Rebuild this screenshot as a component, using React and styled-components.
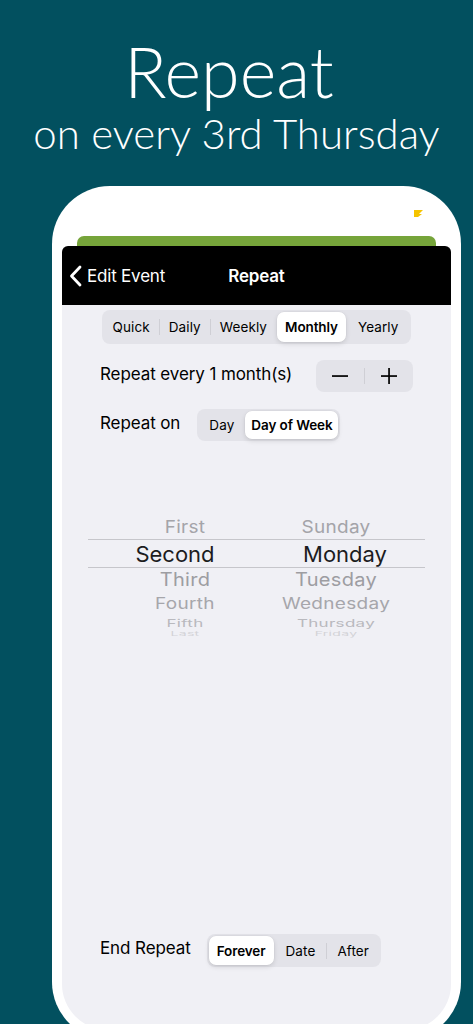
import React from "react";
import styled, { createGlobalStyle } from "styled-components";

const GlobalStyle = createGlobalStyle`
  html, body {
    margin: 0;
    padding: 0;
    background: #02505f;
  }
  body {
    width: 473px;
    height: 1024px;
    overflow: hidden;
    font-family: Inter, "Liberation Sans", sans-serif;
    -webkit-font-smoothing: antialiased;
  }
`;

const Page = styled.div`
  width: 473px;
  height: 1024px;
  overflow: hidden;
  background: #02505f;
`;

const Header = styled.header`
  display: flex;
  flex-direction: column;
  align-items: center;
  color: #fff;
  font-family: Lato, "Noto Sans", sans-serif;
  font-weight: 300;
  padding-top: 33px;
  height: 158px;
  box-sizing: border-box;
`;

const Title = styled.h1`
  margin: 0;
  padding-right: 15px;
  font-size: 70px;
  font-weight: 300;
  line-height: 76px;
`;

const Subtitle = styled.h2`
  margin: 0;
  font-size: 42px;
  font-weight: 300;
  line-height: 48px;
`;

const Phone = styled.div`
  margin: 28px 0 0 52px;
  width: 409px;
  height: 854px;
  box-sizing: border-box;
  background: #fff;
  border-radius: 58px;
  padding: 20px 10px 10px;
  display: flex;
  flex-direction: column;
`;

const StatusBar = styled.div`
  height: 30px;
  display: flex;
  justify-content: flex-end;
  padding-right: 28px;
`;

const Charge = styled.svg`
  width: 9px;
  height: 9px;
  margin-top: 3px;
`;

const SheetEdge = styled.div`
  height: 10px;
  margin: 0 15px;
  background: #76a43a;
  border-radius: 7px 7px 0 0;
`;

const Screen = styled.div`
  flex: 1;
  display: flex;
  flex-direction: column;
  border-radius: 6px 6px 46px 46px;
  overflow: hidden;
  background: #f0f0f5;
`;

const NavBar = styled.nav`
  height: 59px;
  background: #000;
  color: #fff;
  display: grid;
  grid-template-columns: 1fr auto 1fr;
  align-items: center;
  font-size: 17px;
`;

const BackButton = styled.div`
  display: flex;
  align-items: center;
  gap: 5px;
  padding-left: 7px;
  letter-spacing: -0.2px;
`;

const NavTitle = styled.div`
  font-weight: 600;
  letter-spacing: -0.2px;
`;

const Content = styled.div`
  display: flex;
  flex-direction: column;
  padding: 5px 38px 0;
`;

const Segmented = styled.div`
  display: inline-flex;
  align-self: ${(p) => p.$align || "auto"};
  align-items: center;
  padding: 2px;
  height: ${(p) => p.$height || 32}px;
  box-sizing: border-box;
  background: #e3e3e9;
  border-radius: 8px;
`;

const Segment = styled.div`
  height: 100%;
  display: flex;
  align-items: center;
  padding: 0 ${(p) => p.$pad}px;
  font-size: 13.5px;
  font-weight: ${(p) => (p.$active ? 600 : 400)};
  letter-spacing: ${(p) => (p.$active ? "-0.1px" : "0.1px")};
  color: #000;
  border-radius: 7px;
  background: ${(p) => (p.$active ? "#fff" : "transparent")};
  box-shadow: ${(p) =>
    p.$active ? "0 2px 5px rgba(0,0,0,0.12), 0 0 0 0.5px rgba(0,0,0,0.04)" : "none"};
`;

const Divider = styled.div`
  width: 1px;
  height: 16px;
  background: ${(p) => (p.$hidden ? "transparent" : "#cfcfd5")};
  flex-shrink: 0;
`;

const Row = styled.div`
  display: flex;
  align-items: center;
  justify-content: ${(p) => p.$justify || "flex-start"};
  gap: ${(p) => p.$gap || 0}px;
  margin-top: ${(p) => p.$top}px;
`;

const Label = styled.span`
  font-size: 17px;
  color: #000;
  letter-spacing: -0.1px;
  margin-top: ${(p) => p.$lift || 0}px;
`;

const Stepper = styled.div`
  display: flex;
  align-items: center;
  width: 97px;
  height: 32px;
  background: #e3e3e9;
  border-radius: 8px;
`;

const StepButton = styled.div`
  flex: 1;
  height: 100%;
  display: flex;
  align-items: center;
  justify-content: center;
`;

const Picker = styled.div`
  margin: 73px -12px 0;
  display: flex;
  flex-direction: column;
`;

const WheelRow = styled.div`
  display: grid;
  grid-template-columns: 194px 108px;
  height: ${(p) => p.$h}px;
  border-top: ${(p) => (p.$selected ? "1px solid #c6c6cb" : "none")};
  border-bottom: ${(p) => (p.$selected ? "1px solid #c6c6cb" : "none")};
  box-sizing: border-box;
  overflow: visible;
`;

const WheelCell = styled.div`
  display: flex;
  align-items: center;
  justify-content: center;
  white-space: nowrap;
  font-size: ${(p) => p.$size}px;
  color: ${(p) => p.$color};
  letter-spacing: ${(p) => (p.$selected ? "0" : "0.3px")};
  transform: translateX(${(p) => p.$shift || 0}px) scaleY(${(p) => p.$sy});
`;

const wheel = [
  { left: "First", right: "Sunday", h: 25, size: 19, color: "#a4a4a9", sy: 0.93 },
  { left: "Second", right: "Monday", h: 29, size: 22, color: "#1c1c1e", sy: 1, selected: true },
  { left: "Third", right: "Tuesday", h: 24, size: 20, color: "#9d9da2", sy: 0.92 },
  { left: "Fourth", right: "Wednesday", h: 21, size: 19, color: "#a6a6ab", sy: 0.8 },
  { left: "Fifth", right: "Thursday", h: 12, size: 17, color: "#b9b9be", sy: 0.62 },
  { left: "Last", right: "Friday", h: 10, size: 14, color: "#d3d3d7", sy: 0.45 },
];

function SegmentGroup({ items, active, height, align }) {
  const parts = [];
  items.forEach((item, i) => {
    if (i > 0) {
      const hidden = i === active || i - 1 === active;
      parts.push(<Divider key={"d" + i} $hidden={hidden} />);
    }
    parts.push(
      <Segment key={item.label} $active={i === active} $pad={item.pad}>
        {item.label}
      </Segment>
    );
  });
  return (
    <Segmented $height={height} $align={align}>
      {parts}
    </Segmented>
  );
}

export default function App() {
  return (
    <Page>
      <GlobalStyle />
      <Header>
        <Title>Repeat</Title>
        <Subtitle>on every 3rd Thursday</Subtitle>
      </Header>

      <Phone>
        <StatusBar>
          <Charge viewBox="0 0 9 9">
            <path d="M0 1 H9 L5 5 H8 L4 8 H0 Z" fill="#f5c400" />
          </Charge>
        </StatusBar>
        <SheetEdge />
        <Screen>
          <NavBar>
            <BackButton>
              <svg width="13" height="22" viewBox="0 0 13 22">
                <path
                  d="M11 2 L2.5 11 L11 20"
                  fill="none"
                  stroke="#fff"
                  strokeWidth="2.8"
                  strokeLinecap="round"
                  strokeLinejoin="round"
                />
              </svg>
              Edit Event
            </BackButton>
            <NavTitle>Repeat</NavTitle>
            <div />
          </NavBar>

          <Content>
            <SegmentGroup
              align="center"
              height={34}
              active={3}
              items={[
                { label: "Quick", pad: 9 },
                { label: "Daily", pad: 9 },
                { label: "Weekly", pad: 9 },
                { label: "Monthly", pad: 8 },
                { label: "Yearly", pad: 11 },
              ]}
            />

            <Row $top={16} $justify="space-between">
              <Label $lift={-4}>Repeat every 1 month(s)</Label>
              <Stepper>
                <StepButton>
                  <svg width="16" height="16" viewBox="0 0 16 16">
                    <rect x="0" y="7.2" width="16" height="1.7" fill="#000" />
                  </svg>
                </StepButton>
                <Divider />
                <StepButton>
                  <svg width="16" height="16" viewBox="0 0 16 16">
                    <rect x="0" y="7.2" width="16" height="1.7" fill="#000" />
                    <rect x="7.2" y="0" width="1.7" height="16" fill="#000" />
                  </svg>
                </StepButton>
              </Stepper>
            </Row>

            <Row $top={17} $gap={17}>
              <Label $lift={-4}>Repeat on</Label>
              <SegmentGroup
                active={1}
                items={[
                  { label: "Day", pad: 10 },
                  { label: "Day of Week", pad: 6 },
                ]}
              />
            </Row>

            <Picker>
              {wheel.map((r) => (
                <WheelRow key={r.left} $h={r.h} $selected={r.selected}>
                  <WheelCell
                    $size={r.size}
                    $color={r.color}
                    $sy={r.sy}
                    $selected={r.selected}
                    $shift={r.selected ? -10 : 0}
                  >
                    {r.left}
                  </WheelCell>
                  <WheelCell
                    $size={r.size}
                    $color={r.color}
                    $sy={r.sy}
                    $selected={r.selected}
                    $shift={r.selected ? 9 : 0}
                  >
                    {r.right}
                  </WheelCell>
                </WheelRow>
              ))}
            </Picker>

            <Row $top={299} $gap={16}>
              <Label $lift={-6}>End Repeat</Label>
              <SegmentGroup
                height={33}
                active={0}
                items={[
                  { label: "Forever", pad: 8 },
                  { label: "Date", pad: 11 },
                  { label: "After", pad: 10 },
                ]}
              />
            </Row>
          </Content>
        </Screen>
      </Phone>
    </Page>
  );
}
